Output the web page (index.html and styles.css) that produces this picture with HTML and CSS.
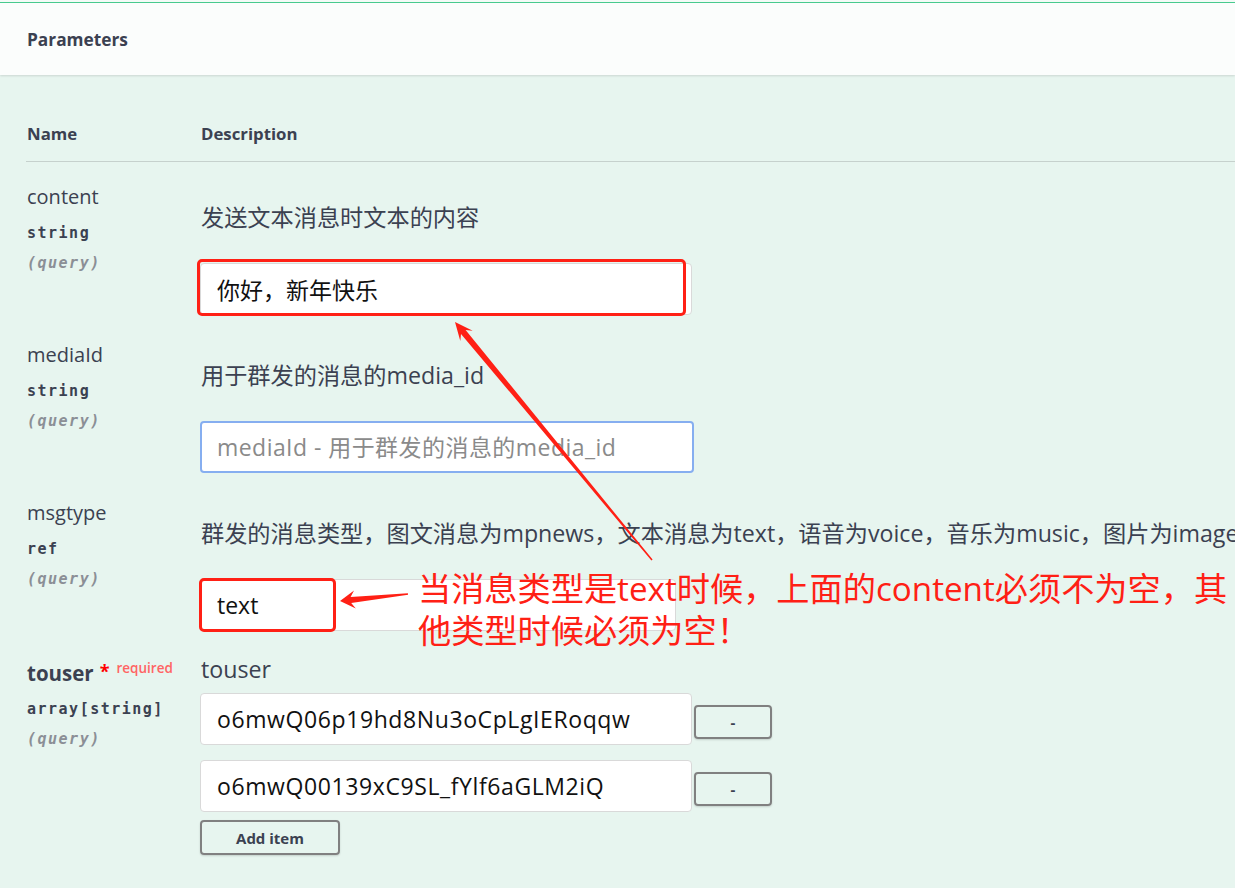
FILE: index.html
```html
<!DOCTYPE html>
<html lang="zh-CN">
<head>
<meta charset="utf-8">
<title>Parameters</title>
<link rel="stylesheet" href="styles.css">
</head>
<body>
<div class="page">
  <div class="topline"></div>
  <div class="section-header"><h4>Parameters</h4></div>

  <div class="params">
    <div class="thead">
      <div class="col-name">Name</div>
      <div class="col-desc">Description</div>
    </div>

    <div class="row">
      <div class="col-name">
        <div class="pname">content</div>
        <div class="ptype">string</div>
        <div class="pin">(query)</div>
      </div>
      <div class="col-desc">
        <div class="dtext">发送文本消息时文本的内容</div>
        <input class="field" type="text" value="你好，新年快乐">
      </div>
    </div>

    <div class="row">
      <div class="col-name">
        <div class="pname">mediaId</div>
        <div class="ptype">string</div>
        <div class="pin">(query)</div>
      </div>
      <div class="col-desc">
        <div class="dtext">用于群发的消息的media_id</div>
        <input class="field field-focus" type="text" placeholder="mediaId - 用于群发的消息的media_id">
      </div>
    </div>

    <div class="row">
      <div class="col-name">
        <div class="pname">msgtype</div>
        <div class="ptype">ref</div>
        <div class="pin">(query)</div>
      </div>
      <div class="col-desc">
        <div class="dtext nowrap">群发的消息类型，图文消息为mpnews，文本消息为text，语音为voice，音乐为music，图片为image</div>
        <input class="field field-short" type="text" value="text">
      </div>
    </div>

    <div class="row row-array">
      <div class="col-name">
        <div class="pname pname-req">touser<span class="star">*</span><span class="req">required</span></div>
        <div class="ptype">array[string]</div>
        <div class="pin">(query)</div>
      </div>
      <div class="col-desc">
        <div class="dtext dtext-array">touser</div>
        <div class="item">
          <input class="field field-latin" type="text" value="o6mwQ06p19hd8Nu3oCpLgIERoqqw">
          <button class="btn-remove">-</button>
        </div>
        <div class="item">
          <input class="field field-latin" type="text" value="o6mwQ00139xC9SL_fYlf6aGLM2iQ">
          <button class="btn-remove">-</button>
        </div>
        <button class="btn-add">Add item</button>
      </div>
    </div>
  </div>

  <div class="mark mark-content"></div>
  <div class="mark mark-type"></div>
  <div class="note">当消息类型是text时候，上面的content必须不为空，其<br>他类型时候必须为空！</div>
  <svg class="arrows" width="1235" height="888" viewBox="0 0 1235 888">
    <polygon fill="#ff2015" points="455,322 472.7,330.8 465.6,330.1 652.6,559.5 651.4,560.5 461,333.9 460.3,341"/>
    <polygon fill="#ff2015" points="340,601 354,590.6 350.6,596.9 407.9,593.2 408.1,594.8 351.2,602.9 355.8,608.4"/>
  </svg>
</div>
</body>
</html>
```

FILE: styles.css
```css
html, body {
  margin: 0;
  padding: 0;
}
body {
  background: #e7f5ef;
  color: #3b4151;
  font-family: "Open Sans", "Noto Sans CJK SC", sans-serif;
  overflow: hidden;
}
.page {
  position: relative;
  width: 1235px;
  height: 888px;
  overflow: hidden;
}
.topline {
  height: 2px;
  background: #f3fbf7;
  border-bottom: 1px solid #49cc90;
}
.section-header {
  height: 72px;
  background: #fbfdfc;
  box-shadow: 0 1px 2px rgba(0, 0, 0, 0.12);
  display: flex;
  align-items: center;
  padding-left: 27px;
}
.section-header h4 {
  margin: 0;
  font-size: 17.3px;
  font-weight: 700;
  color: #3b4151;
}
.params {
  padding-left: 26px;
}
.thead {
  display: flex;
  padding: 47px 0 15px 1px;
  line-height: 24px;
  font-size: 16.8px;
  font-weight: 700;
  border-bottom: 1px solid #c6d1cd;
}
.col-name {
  width: 174px;
  flex: none;
}
.col-desc {
  flex: 1;
  min-width: 0;
}
.row {
  display: flex;
  padding: 0 0 28px 1px;
}
.thead + .row {
  margin-top: 23px;
}
.row-array {
  margin-top: 2px;
}
.pname {
  font-size: 20px;
  line-height: 24px;
  font-weight: 400;
  color: #3b4151;
}
.ptype {
  margin-top: 14px;
  font-family: "DejaVu Sans Mono", monospace;
  font-size: 15px;
  font-weight: 700;
  letter-spacing: 1.5px;
  line-height: 20px;
}
.pin {
  margin-top: 10px;
  font-family: "DejaVu Sans Mono", monospace;
  font-size: 15px;
  font-style: italic;
  font-weight: 700;
  letter-spacing: 1.5px;
  line-height: 20px;
  color: #8b8f96;
}
.pname-req {
  font-weight: 700;
  font-size: 20.5px;
  display: flex;
  align-items: flex-start;
}
.star {
  color: #ff0000;
  font-size: 18px;
  line-height: 20px;
  margin-left: 6px;
}
.req {
  color: #ff6464;
  font-size: 13.5px;
  line-height: 16px;
  font-weight: 600;
  margin-left: 7px;
  margin-top: -1px;
}
.dtext {
  padding-top: 17px;
  font-size: 23.2px;
  line-height: 30px;
  color: #3b4151;
}
.nowrap {
  white-space: nowrap;
}
.dtext-array {
  padding-top: 0;
  margin-top: -7px;
}
.field {
  display: block;
  box-sizing: border-box;
  width: 492px;
  height: 52px;
  margin: 31px 0 0 -1px;
  padding: 0 16px;
  border: 1px solid #d9d9d9;
  border-radius: 4px;
  background: #fff;
  font-family: "Open Sans", "Noto Sans CJK SC", sans-serif;
  font-size: 23px;
  color: #111;
  outline: none;
}
.field::placeholder {
  color: #8a8a8a;
}
.field-focus {
  width: 494px;
  border: 2px solid #86aef0;
  padding-left: 15px;
  letter-spacing: 0.45px;
}
.field-short {
  width: 476px;
}
.field-latin {
  letter-spacing: 0.6px;
}
.item {
  display: flex;
  align-items: center;
  margin-top: 9px;
}
.item + .item {
  margin-top: 15px;
}
.item .field {
  margin-top: 0;
}
.btn-remove {
  width: 78px;
  height: 34px;
  margin: 6px 0 0 2px;
  border: 2px solid #808080;
  border-radius: 4px;
  background: transparent;
  box-shadow: 0 1px 2px rgba(0, 0, 0, 0.15);
  font-family: "Open Sans", sans-serif;
  font-size: 15px;
  font-weight: 700;
  color: #3b4151;
}
.btn-add {
  display: block;
  width: 140px;
  height: 35px;
  margin: 8px 0 0 -1px;
  border: 2px solid #808080;
  border-radius: 4px;
  background: transparent;
  box-shadow: 0 1px 2px rgba(0, 0, 0, 0.15);
  font-family: "Open Sans", sans-serif;
  font-size: 15px;
  font-weight: 700;
  color: #3b4151;
}
.mark {
  position: absolute;
  box-sizing: border-box;
  border: 3px solid #ff2015;
  border-radius: 5px;
}
.mark-content {
  left: 197px;
  top: 259px;
  width: 489px;
  height: 57px;
}
.mark-type {
  left: 199px;
  top: 578px;
  width: 137px;
  height: 54px;
}
.note {
  position: absolute;
  left: 418px;
  top: 568px;
  width: 830px;
  font-family: "Open Sans", "Noto Sans CJK SC", sans-serif;
  font-size: 33.2px;
  line-height: 42px;
  color: #ff2015;
  white-space: nowrap;
}
.arrows {
  position: absolute;
  left: 0;
  top: 0;
  pointer-events: none;
}
```
